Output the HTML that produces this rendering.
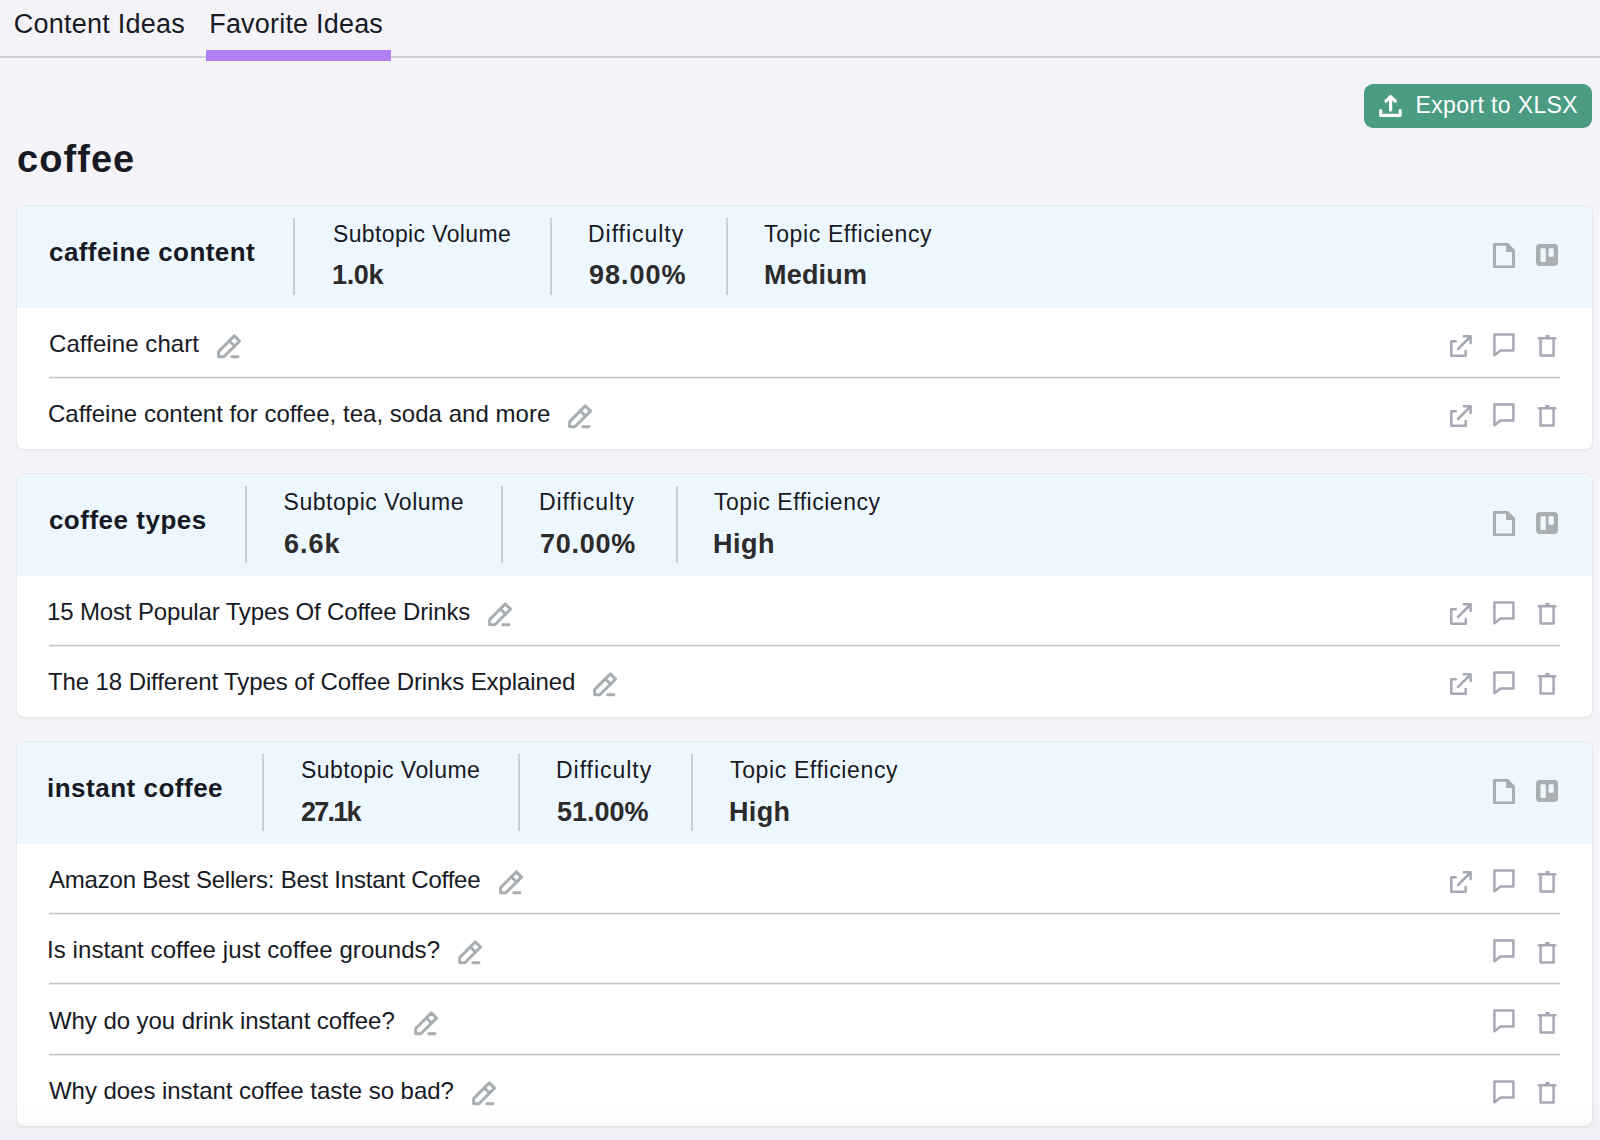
<!DOCTYPE html>
<html><head><meta charset="utf-8"><style>
*{box-sizing:border-box;margin:0;padding:0}
html,body{width:1600px;height:1140px;overflow:hidden;background:#f4f4f8;font-family:"Liberation Sans",sans-serif;color:#171a24}
.abs{position:absolute;white-space:nowrap}
.ic{position:absolute;display:block}
.tab{font-size:27px;line-height:27px;color:#171a24}
.tabline{position:absolute;left:0;top:56px;width:1600px;height:2px;background:#cfd1d7}
.tabbar{position:absolute;left:206px;top:50px;width:185px;height:11px;background:#b07ff6}
.h1{font-size:38px;line-height:38px;font-weight:700;color:#171a24}
.btn{position:absolute;left:1364px;top:84px;width:228px;height:44px;border-radius:9px;background:#4a9c83}
.btntxt{font-size:23px;line-height:23px;color:#fff}
.card{position:absolute;left:16px;width:1577px;background:#fff;border-radius:8px;border:1px solid #e6e6eb;box-shadow:0 1px 2px rgba(20,20,50,0.05);overflow:hidden}
.hdr{position:absolute;left:0;top:0;width:1575px;height:102px;background:#edf7fe}
.title{font-size:26px;line-height:26px;font-weight:700;color:#171a24}
.vdiv{position:absolute;width:2px;height:77px;background:#cbcdd5}
.lbl{font-size:23px;line-height:23px;color:#171a24}
.val{font-size:27px;line-height:27px;font-weight:700;color:#2b2b2b}
.rowtxt{font-size:24px;line-height:24px;color:#171a24}
.hdiv{position:absolute;left:49px;width:1511px;height:1px;background:#c3c6cd;box-shadow:0 1px 0 #e6e7eb,0 -1px 0 #eeeff2}
.fade{position:absolute;left:0;top:1100px;width:1600px;height:40px;background:linear-gradient(rgba(20,20,50,0),rgba(20,20,50,0.022))}
</style></head><body>

<div class="abs tab" style="left:13.75px;top:10.74px;letter-spacing:0.233px">Content Ideas</div>
<div class="abs tab" style="left:209.20px;top:10.74px;letter-spacing:0.200px">Favorite Ideas</div>
<div class="tabline"></div><div class="tabbar"></div>
<div class="abs h1" style="left:17.10px;top:140.23px;letter-spacing:1.040px">coffee</div>
<div class="btn"></div>
<svg class="ic" style="left:1379px;top:94px" width="23" height="23" viewBox="0 0 23 23" fill="none" stroke="#fff" stroke-width="3.2" stroke-linecap="round" stroke-linejoin="round"><path d="M1.7 16.6V21.3H21.2V16.6"/><path d="M11.6 3.2V16.1"/><path d="M6.9 7.2L11.6 2.6L16.3 7.2"/></svg>
<div class="abs btntxt" style="left:1415.50px;top:94.13px;letter-spacing:0.374px">Export to XLSX</div>
<div class="card" style="top:205px;height:245px"><div class="hdr"></div></div>
<div class="abs title" style="left:49.00px;top:238.79px;letter-spacing:0.417px">caffeine content</div>
<div class="vdiv" style="left:293px;top:218px"></div>
<div class="vdiv" style="left:550px;top:218px"></div>
<div class="vdiv" style="left:726px;top:218px"></div>
<div class="abs lbl" style="left:333.00px;top:222.73px;letter-spacing:0.371px">Subtopic Volume</div>
<div class="abs val" style="left:332.00px;top:262.34px;letter-spacing:-0.333px">1.0k</div>
<div class="abs lbl" style="left:588.00px;top:222.73px;letter-spacing:0.966px">Difficulty</div>
<div class="abs val" style="left:589.00px;top:262.34px;letter-spacing:1.000px">98.00%</div>
<div class="abs lbl" style="left:764.00px;top:222.73px;letter-spacing:0.634px">Topic Efficiency</div>
<div class="abs val" style="left:764.00px;top:262.34px;letter-spacing:0.200px">Medium</div>
<svg class="ic" style="left:1493px;top:242.5px" width="22" height="25" viewBox="0 0 22 25"><path fill="#a8aeb1" fill-rule="evenodd" d="M0 1Q0 0 1 0H15L22 7V24Q22 25 21 25H1Q0 25 0 24ZM3 2.7H13V8.9H19V22.4H3Z"/></svg>
<svg class="ic" style="left:1536px;top:244px" width="22" height="22" viewBox="0 0 22 22"><path fill="#a8aeb1" fill-rule="evenodd" d="M4 0H18Q22 0 22 4V18Q22 22 18 22H4Q0 22 0 18V4Q0 0 4 0ZM5.5 4.3H8.8Q9.8 4.3 9.8 5.3V17Q9.8 18 8.8 18H5.5Q4.5 18 4.5 17V5.3Q4.5 4.3 5.5 4.3ZM13.6 4.3H16.8Q17.8 4.3 17.8 5.3V11.7Q17.8 12.7 16.8 12.7H13.6Q12.6 12.7 12.6 11.7V5.3Q12.6 4.3 13.6 4.3Z"/></svg>
<div class="abs rowtxt" style="left:49.00px;top:331.88px;letter-spacing:0.076px">Caffeine chart</div>
<svg class="ic" style="left:217px;top:333.8px" width="24" height="25" viewBox="0 0 24 25" fill="none" stroke="#a7adb0" stroke-width="2.9" stroke-linecap="round" stroke-linejoin="round"><path d="M1.6 22.7V17.6L17.3 1.9L22.5 7.1L6.9 22.7Z"/><path d="M12.4 6.9L17.5 12.1"/><path d="M14.8 22.7H21"/></svg>
<svg class="ic" style="left:1450px;top:335.0px" width="22" height="22" viewBox="0 0 22 22" fill="none" stroke="#a6a9b4" stroke-width="2.5" stroke-linecap="round" stroke-linejoin="round"><path d="M5.8 6.3H1.3V20.7H15.7V16"/><path d="M8 14L20 2"/><path d="M13.9 1.3H20.6V7.9"/></svg>
<svg class="ic" style="left:1493px;top:332.7px" width="22" height="24" viewBox="0 0 22 24" fill="none" stroke="#a6a9b4" stroke-width="2.5" stroke-linecap="round" stroke-linejoin="round"><path d="M1.4 1.4H20.4V17.4H7.6L1.4 22.2Z"/></svg>
<svg class="ic" style="left:1537px;top:334.0px" width="20" height="23" viewBox="0 0 20 23" fill="none" stroke="#a6a9b4" stroke-width="2.5" stroke-linecap="round" stroke-linejoin="round"><path d="M1.9 4.3H18.2"/><path d="M9 2.1H11.8" stroke-width="2"/><path d="M3.6 4.3V21.6H16.6V4.3"/></svg>
<div class="hdiv" style="top:377px"></div>
<div class="abs rowtxt" style="left:48.00px;top:402.03px;letter-spacing:0.033px">Caffeine content for coffee, tea, soda and more</div>
<svg class="ic" style="left:568px;top:403.95px" width="24" height="25" viewBox="0 0 24 25" fill="none" stroke="#a7adb0" stroke-width="2.9" stroke-linecap="round" stroke-linejoin="round"><path d="M1.6 22.7V17.6L17.3 1.9L22.5 7.1L6.9 22.7Z"/><path d="M12.4 6.9L17.5 12.1"/><path d="M14.8 22.7H21"/></svg>
<svg class="ic" style="left:1450px;top:405.15px" width="22" height="22" viewBox="0 0 22 22" fill="none" stroke="#a6a9b4" stroke-width="2.5" stroke-linecap="round" stroke-linejoin="round"><path d="M5.8 6.3H1.3V20.7H15.7V16"/><path d="M8 14L20 2"/><path d="M13.9 1.3H20.6V7.9"/></svg>
<svg class="ic" style="left:1493px;top:402.84999999999997px" width="22" height="24" viewBox="0 0 22 24" fill="none" stroke="#a6a9b4" stroke-width="2.5" stroke-linecap="round" stroke-linejoin="round"><path d="M1.4 1.4H20.4V17.4H7.6L1.4 22.2Z"/></svg>
<svg class="ic" style="left:1537px;top:404.15px" width="20" height="23" viewBox="0 0 20 23" fill="none" stroke="#a6a9b4" stroke-width="2.5" stroke-linecap="round" stroke-linejoin="round"><path d="M1.9 4.3H18.2"/><path d="M9 2.1H11.8" stroke-width="2"/><path d="M3.6 4.3V21.6H16.6V4.3"/></svg>
<div class="card" style="top:473px;height:245px"><div class="hdr"></div></div>
<div class="abs title" style="left:48.90px;top:506.99px;letter-spacing:0.517px">coffee types</div>
<div class="vdiv" style="left:245px;top:486.2px"></div>
<div class="vdiv" style="left:501px;top:486.2px"></div>
<div class="vdiv" style="left:676px;top:486.2px"></div>
<div class="abs lbl" style="left:283.60px;top:490.93px;letter-spacing:0.526px">Subtopic Volume</div>
<div class="abs val" style="left:284.00px;top:530.54px;letter-spacing:1.000px">6.6k</div>
<div class="abs lbl" style="left:538.90px;top:490.93px;letter-spacing:0.947px">Difficulty</div>
<div class="abs val" style="left:540.00px;top:530.54px;letter-spacing:0.720px">70.00%</div>
<div class="abs lbl" style="left:714.00px;top:490.93px;letter-spacing:0.530px">Topic Efficiency</div>
<div class="abs val" style="left:713.00px;top:530.54px;letter-spacing:0.464px">High</div>
<svg class="ic" style="left:1493px;top:510.7px" width="22" height="25" viewBox="0 0 22 25"><path fill="#a8aeb1" fill-rule="evenodd" d="M0 1Q0 0 1 0H15L22 7V24Q22 25 21 25H1Q0 25 0 24ZM3 2.7H13V8.9H19V22.4H3Z"/></svg>
<svg class="ic" style="left:1536px;top:512.2px" width="22" height="22" viewBox="0 0 22 22"><path fill="#a8aeb1" fill-rule="evenodd" d="M4 0H18Q22 0 22 4V18Q22 22 18 22H4Q0 22 0 18V4Q0 0 4 0ZM5.5 4.3H8.8Q9.8 4.3 9.8 5.3V17Q9.8 18 8.8 18H5.5Q4.5 18 4.5 17V5.3Q4.5 4.3 5.5 4.3ZM13.6 4.3H16.8Q17.8 4.3 17.8 5.3V11.7Q17.8 12.7 16.8 12.7H13.6Q12.6 12.7 12.6 11.7V5.3Q12.6 4.3 13.6 4.3Z"/></svg>
<div class="abs rowtxt" style="left:47.00px;top:600.08px;letter-spacing:-0.145px">15 Most Popular Types Of Coffee Drinks</div>
<svg class="ic" style="left:488.2px;top:602.0px" width="24" height="25" viewBox="0 0 24 25" fill="none" stroke="#a7adb0" stroke-width="2.9" stroke-linecap="round" stroke-linejoin="round"><path d="M1.6 22.7V17.6L17.3 1.9L22.5 7.1L6.9 22.7Z"/><path d="M12.4 6.9L17.5 12.1"/><path d="M14.8 22.7H21"/></svg>
<svg class="ic" style="left:1450px;top:603.2px" width="22" height="22" viewBox="0 0 22 22" fill="none" stroke="#a6a9b4" stroke-width="2.5" stroke-linecap="round" stroke-linejoin="round"><path d="M5.8 6.3H1.3V20.7H15.7V16"/><path d="M8 14L20 2"/><path d="M13.9 1.3H20.6V7.9"/></svg>
<svg class="ic" style="left:1493px;top:600.9000000000001px" width="22" height="24" viewBox="0 0 22 24" fill="none" stroke="#a6a9b4" stroke-width="2.5" stroke-linecap="round" stroke-linejoin="round"><path d="M1.4 1.4H20.4V17.4H7.6L1.4 22.2Z"/></svg>
<svg class="ic" style="left:1537px;top:602.2px" width="20" height="23" viewBox="0 0 20 23" fill="none" stroke="#a6a9b4" stroke-width="2.5" stroke-linecap="round" stroke-linejoin="round"><path d="M1.9 4.3H18.2"/><path d="M9 2.1H11.8" stroke-width="2"/><path d="M3.6 4.3V21.6H16.6V4.3"/></svg>
<div class="hdiv" style="top:645px"></div>
<div class="abs rowtxt" style="left:48.00px;top:670.23px;letter-spacing:-0.105px">The 18 Different Types of Coffee Drinks Explained</div>
<svg class="ic" style="left:592.7px;top:672.15px" width="24" height="25" viewBox="0 0 24 25" fill="none" stroke="#a7adb0" stroke-width="2.9" stroke-linecap="round" stroke-linejoin="round"><path d="M1.6 22.7V17.6L17.3 1.9L22.5 7.1L6.9 22.7Z"/><path d="M12.4 6.9L17.5 12.1"/><path d="M14.8 22.7H21"/></svg>
<svg class="ic" style="left:1450px;top:673.35px" width="22" height="22" viewBox="0 0 22 22" fill="none" stroke="#a6a9b4" stroke-width="2.5" stroke-linecap="round" stroke-linejoin="round"><path d="M5.8 6.3H1.3V20.7H15.7V16"/><path d="M8 14L20 2"/><path d="M13.9 1.3H20.6V7.9"/></svg>
<svg class="ic" style="left:1493px;top:671.0500000000001px" width="22" height="24" viewBox="0 0 22 24" fill="none" stroke="#a6a9b4" stroke-width="2.5" stroke-linecap="round" stroke-linejoin="round"><path d="M1.4 1.4H20.4V17.4H7.6L1.4 22.2Z"/></svg>
<svg class="ic" style="left:1537px;top:672.35px" width="20" height="23" viewBox="0 0 20 23" fill="none" stroke="#a6a9b4" stroke-width="2.5" stroke-linecap="round" stroke-linejoin="round"><path d="M1.9 4.3H18.2"/><path d="M9 2.1H11.8" stroke-width="2"/><path d="M3.6 4.3V21.6H16.6V4.3"/></svg>
<div class="card" style="top:741px;height:386px"><div class="hdr"></div></div>
<div class="abs title" style="left:47.00px;top:775.19px;letter-spacing:0.504px">instant coffee</div>
<div class="vdiv" style="left:262px;top:754.4px"></div>
<div class="vdiv" style="left:518px;top:754.4px"></div>
<div class="vdiv" style="left:691px;top:754.4px"></div>
<div class="abs lbl" style="left:301.00px;top:759.13px;letter-spacing:0.442px">Subtopic Volume</div>
<div class="abs val" style="left:301.00px;top:798.74px;letter-spacing:-1.750px">27.1k</div>
<div class="abs lbl" style="left:556.00px;top:759.13px;letter-spacing:0.966px">Difficulty</div>
<div class="abs val" style="left:557.00px;top:798.74px;letter-spacing:0.000px">51.00%</div>
<div class="abs lbl" style="left:730.00px;top:759.13px;letter-spacing:0.634px">Topic Efficiency</div>
<div class="abs val" style="left:729.00px;top:798.74px;letter-spacing:0.333px">High</div>
<svg class="ic" style="left:1493px;top:778.9px" width="22" height="25" viewBox="0 0 22 25"><path fill="#a8aeb1" fill-rule="evenodd" d="M0 1Q0 0 1 0H15L22 7V24Q22 25 21 25H1Q0 25 0 24ZM3 2.7H13V8.9H19V22.4H3Z"/></svg>
<svg class="ic" style="left:1536px;top:780.4px" width="22" height="22" viewBox="0 0 22 22"><path fill="#a8aeb1" fill-rule="evenodd" d="M4 0H18Q22 0 22 4V18Q22 22 18 22H4Q0 22 0 18V4Q0 0 4 0ZM5.5 4.3H8.8Q9.8 4.3 9.8 5.3V17Q9.8 18 8.8 18H5.5Q4.5 18 4.5 17V5.3Q4.5 4.3 5.5 4.3ZM13.6 4.3H16.8Q17.8 4.3 17.8 5.3V11.7Q17.8 12.7 16.8 12.7H13.6Q12.6 12.7 12.6 11.7V5.3Q12.6 4.3 13.6 4.3Z"/></svg>
<div class="abs rowtxt" style="left:49.00px;top:868.28px;letter-spacing:-0.210px">Amazon Best Sellers: Best Instant Coffee</div>
<svg class="ic" style="left:499px;top:870.1999999999999px" width="24" height="25" viewBox="0 0 24 25" fill="none" stroke="#a7adb0" stroke-width="2.9" stroke-linecap="round" stroke-linejoin="round"><path d="M1.6 22.7V17.6L17.3 1.9L22.5 7.1L6.9 22.7Z"/><path d="M12.4 6.9L17.5 12.1"/><path d="M14.8 22.7H21"/></svg>
<svg class="ic" style="left:1450px;top:871.4px" width="22" height="22" viewBox="0 0 22 22" fill="none" stroke="#a6a9b4" stroke-width="2.5" stroke-linecap="round" stroke-linejoin="round"><path d="M5.8 6.3H1.3V20.7H15.7V16"/><path d="M8 14L20 2"/><path d="M13.9 1.3H20.6V7.9"/></svg>
<svg class="ic" style="left:1493px;top:869.1px" width="22" height="24" viewBox="0 0 22 24" fill="none" stroke="#a6a9b4" stroke-width="2.5" stroke-linecap="round" stroke-linejoin="round"><path d="M1.4 1.4H20.4V17.4H7.6L1.4 22.2Z"/></svg>
<svg class="ic" style="left:1537px;top:870.4px" width="20" height="23" viewBox="0 0 20 23" fill="none" stroke="#a6a9b4" stroke-width="2.5" stroke-linecap="round" stroke-linejoin="round"><path d="M1.9 4.3H18.2"/><path d="M9 2.1H11.8" stroke-width="2"/><path d="M3.6 4.3V21.6H16.6V4.3"/></svg>
<div class="hdiv" style="top:913px"></div>
<div class="abs rowtxt" style="left:47.00px;top:938.43px;letter-spacing:0.081px">Is instant coffee just coffee grounds?</div>
<svg class="ic" style="left:458.4px;top:940.3499999999999px" width="24" height="25" viewBox="0 0 24 25" fill="none" stroke="#a7adb0" stroke-width="2.9" stroke-linecap="round" stroke-linejoin="round"><path d="M1.6 22.7V17.6L17.3 1.9L22.5 7.1L6.9 22.7Z"/><path d="M12.4 6.9L17.5 12.1"/><path d="M14.8 22.7H21"/></svg>
<svg class="ic" style="left:1493px;top:939.25px" width="22" height="24" viewBox="0 0 22 24" fill="none" stroke="#a6a9b4" stroke-width="2.5" stroke-linecap="round" stroke-linejoin="round"><path d="M1.4 1.4H20.4V17.4H7.6L1.4 22.2Z"/></svg>
<svg class="ic" style="left:1537px;top:940.55px" width="20" height="23" viewBox="0 0 20 23" fill="none" stroke="#a6a9b4" stroke-width="2.5" stroke-linecap="round" stroke-linejoin="round"><path d="M1.9 4.3H18.2"/><path d="M9 2.1H11.8" stroke-width="2"/><path d="M3.6 4.3V21.6H16.6V4.3"/></svg>
<div class="hdiv" style="top:983px"></div>
<div class="abs rowtxt" style="left:49.00px;top:1008.58px;letter-spacing:-0.065px">Why do you drink instant coffee?</div>
<svg class="ic" style="left:413.9px;top:1010.5px" width="24" height="25" viewBox="0 0 24 25" fill="none" stroke="#a7adb0" stroke-width="2.9" stroke-linecap="round" stroke-linejoin="round"><path d="M1.6 22.7V17.6L17.3 1.9L22.5 7.1L6.9 22.7Z"/><path d="M12.4 6.9L17.5 12.1"/><path d="M14.8 22.7H21"/></svg>
<svg class="ic" style="left:1493px;top:1009.4000000000001px" width="22" height="24" viewBox="0 0 22 24" fill="none" stroke="#a6a9b4" stroke-width="2.5" stroke-linecap="round" stroke-linejoin="round"><path d="M1.4 1.4H20.4V17.4H7.6L1.4 22.2Z"/></svg>
<svg class="ic" style="left:1537px;top:1010.7px" width="20" height="23" viewBox="0 0 20 23" fill="none" stroke="#a6a9b4" stroke-width="2.5" stroke-linecap="round" stroke-linejoin="round"><path d="M1.9 4.3H18.2"/><path d="M9 2.1H11.8" stroke-width="2"/><path d="M3.6 4.3V21.6H16.6V4.3"/></svg>
<div class="hdiv" style="top:1054px"></div>
<div class="abs rowtxt" style="left:49.00px;top:1078.73px;letter-spacing:-0.045px">Why does instant coffee taste so bad?</div>
<svg class="ic" style="left:472.4px;top:1080.6499999999999px" width="24" height="25" viewBox="0 0 24 25" fill="none" stroke="#a7adb0" stroke-width="2.9" stroke-linecap="round" stroke-linejoin="round"><path d="M1.6 22.7V17.6L17.3 1.9L22.5 7.1L6.9 22.7Z"/><path d="M12.4 6.9L17.5 12.1"/><path d="M14.8 22.7H21"/></svg>
<svg class="ic" style="left:1493px;top:1079.55px" width="22" height="24" viewBox="0 0 22 24" fill="none" stroke="#a6a9b4" stroke-width="2.5" stroke-linecap="round" stroke-linejoin="round"><path d="M1.4 1.4H20.4V17.4H7.6L1.4 22.2Z"/></svg>
<svg class="ic" style="left:1537px;top:1080.85px" width="20" height="23" viewBox="0 0 20 23" fill="none" stroke="#a6a9b4" stroke-width="2.5" stroke-linecap="round" stroke-linejoin="round"><path d="M1.9 4.3H18.2"/><path d="M9 2.1H11.8" stroke-width="2"/><path d="M3.6 4.3V21.6H16.6V4.3"/></svg>
<div class="fade"></div>
</body></html>
